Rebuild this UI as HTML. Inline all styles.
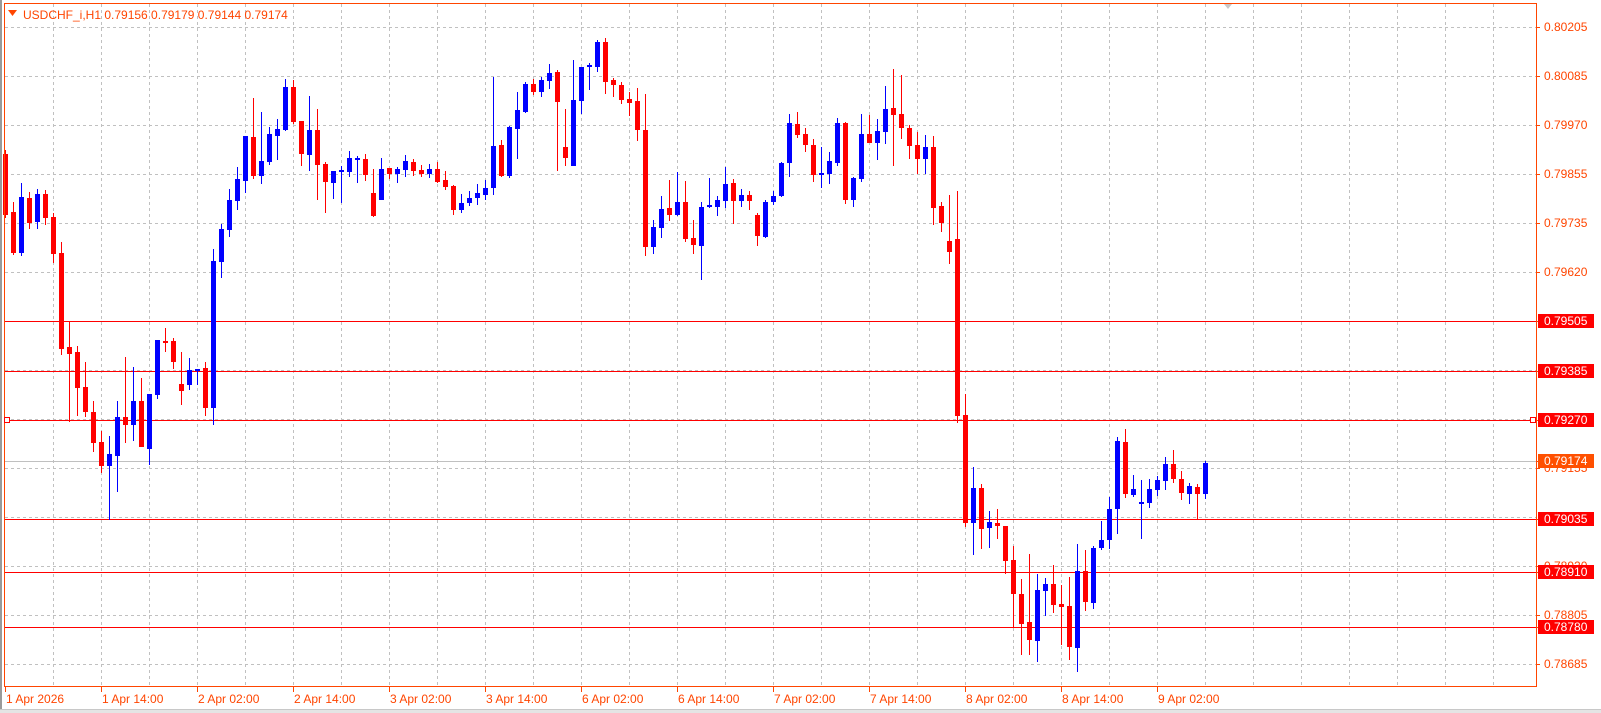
<!DOCTYPE html>
<html><head><meta charset="utf-8">
<style>
html,body{margin:0;padding:0;background:#fff;width:1601px;height:713px;overflow:hidden}
svg{display:block}
text{font-family:"Liberation Sans",Arial,sans-serif;font-size:12px}
</style></head>
<body>
<svg id="c" width="1601" height="713" xmlns="http://www.w3.org/2000/svg">
<rect x="0" y="0" width="1601" height="713" fill="#fff"/>
<rect x="0" y="0" width="2" height="713" fill="#9a9a9a"/>
<rect x="0" y="709" width="1601" height="4" fill="#e4e4e4"/>
<rect x="0" y="709" width="1601" height="1" fill="#c8c8c8"/>
<g id="grid" stroke="#c0c0c0" stroke-width="1" stroke-dasharray="3,3"></g>
<g id="lines"></g>
<g id="candles"></g>
<rect x="4.5" y="3.5" width="1532" height="683" fill="none" stroke="#ff4500" stroke-width="1"/>
<rect x="4.5" y="417.5" width="5" height="5" fill="#fff" stroke="#ff0000"/>
<rect x="1530.5" y="417.5" width="5" height="5" fill="#fff" stroke="#ff0000"/>
<polygon points="1224,4 1232,4 1228,9" fill="#c8c8c8"/>
<polygon points="8,10 17,10 12.5,16" fill="#ff4500"/>
<text x="23" y="19" fill="#ff4500">USDCHF_i,H1  0.79156 0.79179 0.79144 0.79174</text>
<g id="ticks" stroke="#ff4500"></g>
<g fill="#ff4500">
<text x="1544" y="31">0.80205</text>
<text x="1544" y="80">0.80085</text>
<text x="1544" y="129">0.79970</text>
<text x="1544" y="178">0.79855</text>
<text x="1544" y="227">0.79735</text>
<text x="1544" y="276">0.79620</text>
<text x="1544" y="472">0.79155</text>
<text x="1544" y="570">0.78920</text>
<text x="1544" y="619">0.78805</text>
<text x="1544" y="668">0.78685</text>
</g>
<g>
<rect x="1538" y="314" width="56" height="14" fill="#ff0000"/>
<rect x="1538" y="364" width="56" height="14" fill="#ff0000"/>
<rect x="1538" y="413" width="56" height="14" fill="#ff0000"/>
<rect x="1538" y="454" width="56" height="14" fill="#ff5000"/>
<rect x="1538" y="512" width="56" height="14" fill="#ff0000"/>
<rect x="1538" y="565" width="56" height="14" fill="#ff0000"/>
<rect x="1538" y="620" width="56" height="14" fill="#ff0000"/>
</g>
<g fill="#fff">
<text x="1544" y="325">0.79505</text>
<text x="1544" y="375">0.79385</text>
<text x="1544" y="424">0.79270</text>
<text x="1544" y="465">0.79174</text>
<text x="1544" y="523">0.79035</text>
<text x="1544" y="576">0.78910</text>
<text x="1544" y="631">0.78780</text>
</g>
<g fill="#ff4500">
<text x="6" y="703">1 Apr 2026</text>
<text x="102" y="703">1 Apr 14:00</text>
<text x="198" y="703">2 Apr 02:00</text>
<text x="294" y="703">2 Apr 14:00</text>
<text x="390" y="703">3 Apr 02:00</text>
<text x="486" y="703">3 Apr 14:00</text>
<text x="582" y="703">6 Apr 02:00</text>
<text x="678" y="703">6 Apr 14:00</text>
<text x="774" y="703">7 Apr 02:00</text>
<text x="870" y="703">7 Apr 14:00</text>
<text x="966" y="703">8 Apr 02:00</text>
<text x="1062" y="703">8 Apr 14:00</text>
<text x="1158" y="703">9 Apr 02:00</text>
</g>
</svg>
<script>
(function(){
var NS="http://www.w3.org/2000/svg";
function el(p,n,a){var e=document.createElementNS(NS,n);for(var k in a)e.setAttribute(k,a[k]);p.appendChild(e);return e;}
var g=document.getElementById('grid');
for(var k=1;k<=31;k++){var x=5+48*k+0.5;el(g,'line',{x1:x,y1:4,x2:x,y2:686});}
for(var k=0;k<=13;k++){var y=Math.round(27.3+49*k)+0.5;el(g,'line',{x1:5,y1:y,x2:1536,y2:y});}
var L=document.getElementById('lines');
el(L,'line',{x1:5,y1:461.5,x2:1536,y2:461.5,stroke:'#c0c0c0'});
[321,371,420,519,572,627].forEach(function(y){el(L,'line',{x1:5,y1:y+0.5,x2:1536,y2:y+0.5,stroke:'#ff0000'});});
var T=document.getElementById('ticks');
for(var k=0;k<=12;k++){var x=5+96*k+0.5;el(T,'line',{x1:x,y1:687,x2:x,y2:692});}
[27,76,125,174,223,272,321,371,420,461,468,519,566,572,615,627,664].forEach(function(y){el(T,'line',{x1:1536,y1:y+0.5,x2:1540,y2:y+0.5});});
var d=[
[0,'r',150,218,154,215],[1,'r',202,255,212,253],[2,'b',183,256,197,253],[3,'r',192,229,198,223],
[4,'b',189,229,194,222],[5,'r',190,225,194,218],[6,'r',213,263,217,254],[7,'r',242,355,253,349],
[8,'r',322,422,347,354],[9,'r',346,416,352,388],[10,'r',362,417,387,412],[11,'r',401,452,412,443],
[12,'r',431,473,442,466],[13,'b',436,520,454,466],[14,'b',401,492,417,456],[15,'r',357,443,417,425],
[16,'b',367,441,401,425],[17,'r',378,447,401,447],[18,'b',394,465,394,449],[19,'b',340,399,340,395],
[20,'r',328,352,341,343],[21,'r',338,369,341,362],[22,'r',352,405,384,391],[23,'b',358,390,370,385],
[24,'b',369,385,369,371],[25,'r',362,416,368,408],[26,'b',249,425,261,408],[27,'b',224,278,229,262],
[28,'b',189,237,200,230],[29,'b',167,210,179,201],[30,'b',136,193,136,181],[31,'r',98,179,137,176],
[32,'b',112,184,161,176],[33,'b',127,165,134,162],[34,'b',119,160,129,136],[35,'b',79,131,87,130],
[36,'r',80,124,87,122],[37,'r',121,166,121,154],[38,'b',96,171,130,155],[39,'r',109,200,130,165],
[40,'r',162,213,164,182],[41,'b',171,199,171,183],[42,'b',166,203,170,171],[43,'b',151,177,158,172],
[44,'b',156,183,158,159],[45,'r',154,181,159,175],[46,'r',169,217,193,216],[47,'b',158,200,169,200],
[48,'r',168,179,168,174],[49,'b',167,183,169,174],[50,'b',155,177,161,170],[51,'r',159,176,162,171],
[52,'r',165,177,170,174],[53,'b',164,178,169,174],[54,'r',162,183,169,182],[55,'r',171,190,180,187],
[56,'r',185,215,186,210],[57,'b',194,213,203,210],[58,'b',191,206,198,203],[59,'b',184,205,193,198],
[60,'b',180,200,188,195],[61,'b',77,195,146,188],[62,'r',140,177,145,176],[63,'b',126,178,127,176],
[64,'b',92,159,110,129],[65,'b',82,113,84,112],[66,'r',79,95,84,92],[67,'b',77,97,80,92],
[68,'b',64,89,73,81],[69,'r',70,171,72,102],[70,'r',109,166,147,158],[71,'b',60,166,100,166],
[72,'b',67,114,67,101],[73,'b',63,90,65,67],[74,'b',40,72,42,67],[75,'r',38,94,42,82],
[76,'r',78,97,80,85],[77,'r',82,104,85,100],[78,'r',92,116,99,103],[79,'r',88,141,101,130],
[80,'r',94,256,130,247],[81,'b',220,254,227,247],[82,'b',196,238,209,228],[83,'r',180,221,208,215],
[84,'b',172,216,202,215],[85,'r',181,242,202,239],[86,'r',220,254,238,245],[87,'b',202,280,207,246],
[88,'b',178,208,205,207],[89,'b',196,216,200,207],[90,'b',167,208,184,201],[91,'r',179,224,183,201],
[92,'b',189,207,195,201],[93,'r',191,210,195,201],[94,'r',213,246,215,236],[95,'b',200,238,202,237],
[96,'b',191,205,196,202],[97,'b',162,197,163,196],[98,'b',114,177,123,163],[99,'r',112,138,124,135],
[100,'r',128,152,134,145],[101,'r',139,182,145,175],[102,'b',147,188,173,175],[103,'b',152,184,161,174],
[104,'b',118,166,123,163],[105,'r',122,204,123,200],[106,'b',177,207,178,200],[107,'b',114,182,134,179],
[108,'r',115,143,134,143],[109,'b',119,160,131,143],[110,'b',86,144,109,132],[111,'r',69,166,108,115],
[112,'r',75,139,114,128],[113,'r',125,159,128,146],[114,'r',132,174,145,159],[115,'b',135,174,147,159],
[116,'r',136,225,147,208],[117,'r',202,232,206,223],[118,'r',195,264,241,252],[119,'r',191,423,239,416],
[120,'r',394,527,415,523],[121,'b',467,555,488,523],[122,'r',484,549,488,529],[123,'b',511,548,522,528],
[124,'r',509,539,523,526],[125,'r',526,574,526,561],[126,'r',546,627,560,594],[127,'r',579,655,594,624],
[128,'r',554,655,622,640],[129,'b',574,662,590,641],[130,'b',578,616,584,591],[131,'r',565,613,584,605],
[132,'r',585,645,604,607],[133,'r',577,660,606,647],[134,'b',544,672,571,648],[135,'r',550,611,571,602],
[136,'b',546,609,548,603],[137,'b',521,550,540,548],[138,'b',497,549,509,540],[139,'b',437,534,441,509],
[140,'r',429,498,442,494],[141,'b',475,497,489,495],[142,'b',480,539,502,504],[143,'b',479,508,489,503],
[144,'b',476,496,480,490],[145,'b',457,490,464,481],[146,'r',450,483,464,479],[147,'r',471,500,479,493],
[148,'b',483,504,486,494],[149,'r',484,520,487,494],[150,'b',461,499,463,494]
];
var C=document.getElementById('candles');
d.forEach(function(c){
  var x=5+8*c[0];var col=c[1]=='r'?'#ff0000':'#0000ff';
  var wt=Math.max(c[2],4);
  el(C,'rect',{x:x,y:wt,width:1,height:Math.max(1,c[3]-wt),fill:col});
  var bt=Math.max(c[4],4);
  el(C,'rect',{x:x-2,y:bt,width:5,height:Math.max(2,c[5]-bt),fill:col});
});
})();
</script>
</body></html>
